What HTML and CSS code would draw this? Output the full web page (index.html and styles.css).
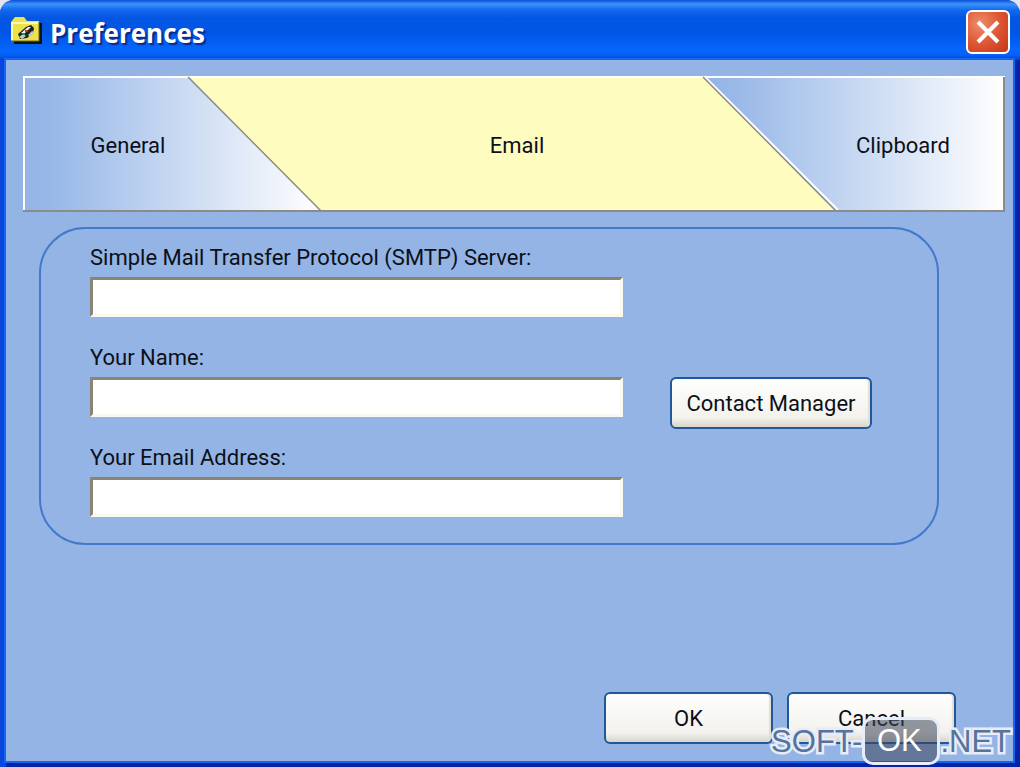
FILE: index.html
```html
<!DOCTYPE html>
<html lang="en">
<head>
    <meta charset="UTF-8">
    <meta name="viewport" content="width=device-width, initial-scale=1.0">
    <title>Preferences</title>
    <link rel="stylesheet" href="styles.css">
</head>
<body>
    <div class="window">
        <header class="titlebar">
            <svg class="app-icon" width="32" height="28" viewBox="0 0 32 28" aria-hidden="true">
                <path d="M4 28V7h28v21z" fill="#10140c"/>
                <path d="M1 25V6l4-5h9l3 4h12v20z" fill="#ece34c"/>
                <path d="M2 24V7h26" fill="none" stroke="#fbf9b4" stroke-width="2"/>
                <path d="M29 6v19H1" fill="none" stroke="#6e6c1c"/>
                <path d="M8 18l8-7 5-2 3 3-1 5-6 5-7 1z" fill="#20201c"/>
                <path d="M11 17l7-6 3 0-7 7z" fill="#f2f2f2"/>
                <path d="M9 21l4-3 3 2-4 3zM18 19l4-4 2 1-4 5z" fill="#c4c8cc"/>
                <path d="M15 14h3v2h-3z" fill="#e02818"/>
                <path d="M12 17h3v2h-3z" fill="#1d9a3c"/>
            </svg>
            <h1>Preferences</h1>
            <button class="close" type="button" aria-label="Close">
                <svg width="26" height="26" viewBox="0 0 26 26">
                    <path d="M3 3l20 20M23 3L3 23" stroke="#fff" stroke-width="4"/>
                </svg>
            </button>
        </header>

        <main>
            <nav class="tabs">
                <svg class="tabs-shape" viewBox="0 0 982 136" preserveAspectRatio="none" aria-hidden="true">
                    <defs>
                        <linearGradient id="fade">
                            <stop offset="0" stop-color="#94b5e6"/>
                            <stop offset="0.1" stop-color="#98b8e7"/>
                            <stop offset="1" stop-color="#ffffff"/>
                        </linearGradient>
                    </defs>
                    <path d="M0 0H165L298 135H0z" fill="url(#fade)"/>
                    <path d="M165 0H680L813 135H298z" fill="#fffcc0"/>
                    <path d="M680 0H982V135H813z" fill="url(#fade)"/>
                    <path d="M1 135V1H982" fill="none" stroke="#fff" stroke-width="2"/>
                    <path d="M682 1L815 134" stroke="#fff" stroke-width="2"/>
                    <path d="M165 1L298 135M680 1L813 135" stroke="#8a8a86" stroke-width="1.5"/>
                    <path d="M981 1V135H0" fill="none" stroke="#8c8b86" stroke-width="2"/>
                </svg>
                <button type="button">General</button>
                <button type="button" aria-current="page">Email</button>
                <button type="button">Clipboard</button>
            </nav>

            <form id="email-form" class="panel">
                <div class="fields">
                    <label for="smtp">Simple Mail Transfer Protocol (SMTP) Server:</label>
                    <input type="text" id="smtp" name="smtp">
                    <label for="name">Your Name:</label>
                    <input type="text" id="name" name="name">
                    <label for="email">Your Email Address:</label>
                    <input type="text" id="email" name="email">
                </div>
                <button class="btn contact" type="button">Contact Manager</button>
            </form>

            <footer class="actions">
                <button class="btn" type="submit" form="email-form">OK</button>
                <button class="btn" type="button">Cancel</button>
            </footer>
        </main>

        <div class="watermark">
            <span class="outlined">SOFT-</span>
            <span class="badge">OK</span>
            <span class="outlined">.NET</span>
        </div>
    </div>
</body>
</html>
```
FILE: styles.css
```css
* {
    box-sizing: border-box;
}
body {
    margin: 0;
    background-color: #e6e3ee;
    font-family: Roboto, Arial, sans-serif;
    font-size: 22px;
    line-height: 32px;
    color: #0c1018;
}
button, input {
    font: inherit;
    color: inherit;
}
.window {
    position: relative;
    display: flex;
    flex-direction: column;
    min-height: 100vh;
    border-radius: 14px 14px 0 0;
    overflow: hidden;
    background-color: #0a45dd;
}

/* title bar */
.titlebar {
    display: flex;
    align-items: center;
    height: 60px;
    padding: 4px 10px 0;
    background: linear-gradient(#0a4fd8 0, #3c93fb 4px, #1268ee 10px, #0456e2 18px, #0256e6 34px, #0566fd 50px, #0560f5 55px, #0243cc 60px);
}
.app-icon {
    margin-bottom: 4px;
}
h1 {
    flex: 1;
    margin: 2px 0 0 8px;
    font-family: "Open Sans", sans-serif;
    font-size: 26px;
    font-weight: bold;
    color: #fff;
    text-shadow: 2px 2px 1px #0a2a8c;
}
.close {
    display: flex;
    align-items: center;
    justify-content: center;
    width: 44px;
    height: 44px;
    padding: 0;
    border: 2px solid #fff;
    border-radius: 6px;
    background: radial-gradient(circle at 30% 30%, #ee8c6c, #dd5230 55%, #c03a14);
}

main {
    flex: 1;
    display: flex;
    flex-direction: column;
    margin: 0 7px 6px 6px;
    padding: 16px 8px 17px 17px;
    background-color: #94b4e5;
    box-shadow: 0 0 0 2px #1566ee, 4px 4px 0 4px #0423a8;
}

/* slanted tabs */
.tabs {
    position: relative;
    display: grid;
    grid-template-columns: 210fr 568fr 204fr;
    height: 136px;
}
.tabs-shape {
    position: absolute;
    width: 100%;
    height: 100%;
}
.tabs button {
    position: relative;
    padding: 4px 0 0;
    border: none;
    background: none;
}

.panel {
    display: flex;
    margin: 15px 66px 0 16px;
    padding: 13px 65px 26px 49px;
    border: 2px solid #4279cb;
    border-radius: 46px;
}
.fields {
    flex: 1;
    display: flex;
    flex-direction: column;
}
input {
    height: 40px;
    margin: 3px 0 25px;
    padding: 0 6px;
    border: 3px solid;
    border-color: #8a8474 #fbf8f0 #fbf8f0 #8a8474;
    background-color: #fff;
}
input:last-child {
    margin-bottom: 0;
}
.btn {
    width: 169px;
    height: 52px;
    padding: 2px 0 0;
    border: 2px solid #20589a;
    border-radius: 6px;
    background: linear-gradient(#fefefd, #f3f2ed 80%, #d9d5c9);
    box-shadow: inset -2px 0 1px #e2dfd4;
}
.contact {
    width: 202px;
    margin: 135px 0 0 47px;
}
.actions {
    display: flex;
    justify-content: flex-end;
    gap: 14px;
    margin: auto 49px 0 0;
    padding-top: 20px;
}

.watermark {
    position: absolute;
    right: 9px;
    bottom: 2px;
    display: flex;
    align-items: center;
    font-family: "Liberation Sans", Arial, sans-serif;
    font-size: 31px;
    pointer-events: none;
}
.outlined {
    padding-top: 2px;
    color: #57739a;
    -webkit-text-stroke: 5px #e6edf8;
    paint-order: stroke fill;
}
.badge {
    width: 78px;
    padding-right: 4px;
    border: 3px solid #e6edf8;
    border-radius: 11px;
    background-color: rgba(60, 70, 90, 0.55);
    line-height: 42px;
    text-align: center;
    color: #fff;
}
```
